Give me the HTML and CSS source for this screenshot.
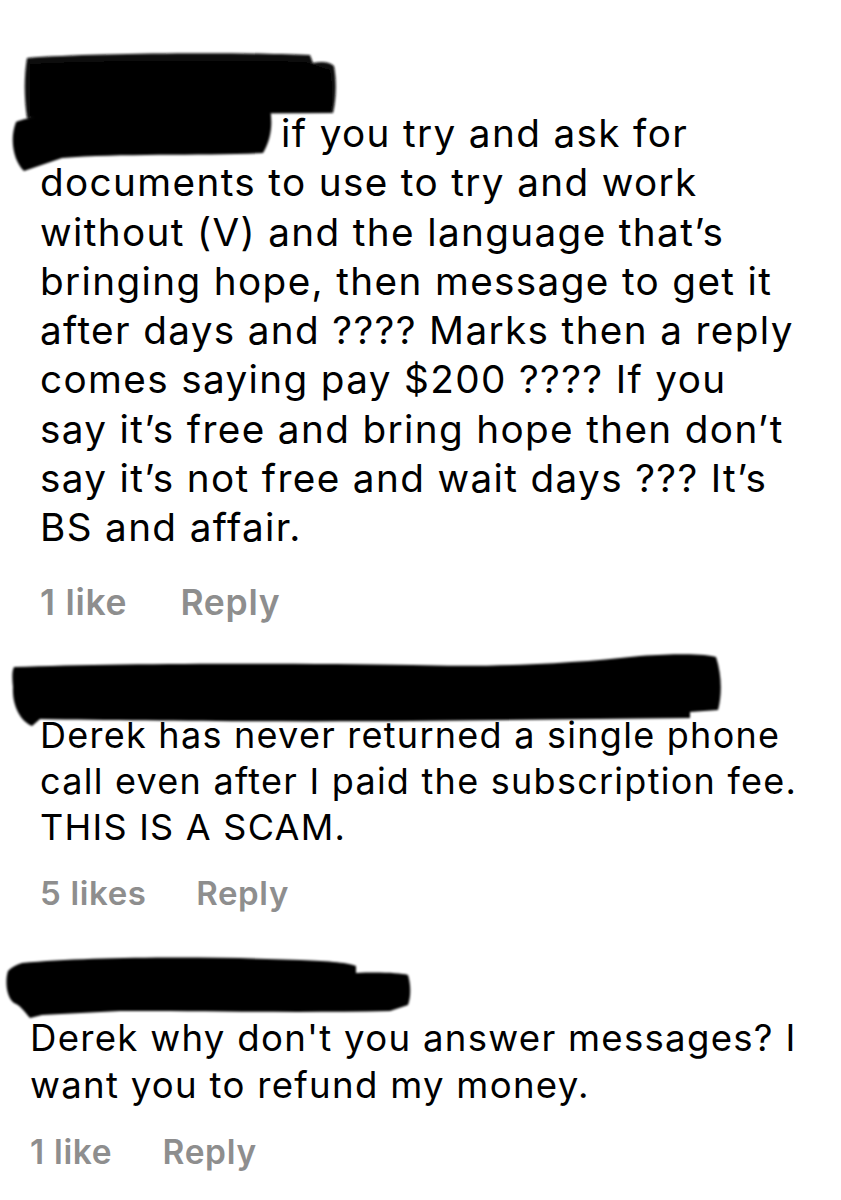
FILE: index.html
```html
<!DOCTYPE html>
<html lang="en">
<head>
    <meta charset="UTF-8">
    <meta name="viewport" content="width=device-width, initial-scale=1.0">
    <title>Comments</title>
    <link rel="stylesheet" href="styles.css">
</head>
<body>

    <!-- first comment, author and mention blacked out -->
    <div class="comment first">
        <div class="author">
            <svg class="redact" width="841" height="130" viewBox="0 52 841 130">
                <defs>
                    <filter id="soft1" x="-5%" y="-20%" width="110%" height="140%">
                        <feGaussianBlur stdDeviation="1.3"/>
                    </filter>
                </defs>
                <g filter="url(#soft1)">
                    <path fill="#0d0d0d" d="M27,58 C90,53 230,52 310,55 L313,63 C322,61 330,62 334,66 C337,82 336,100 333,113 L120,114 L27,118 C24,98 24,75 27,58 Z"/>
                    <path fill="#000" d="M30,64 C100,60 240,60 305,62 L330,70 C333,88 333,104 330,112 L110,112 L30,116 Z"/>
                    <path fill="#000" d="M16,122 C40,112 120,106 240,105 L270,109 C273,124 271,140 263,153 C200,156 120,153 62,158 L24,171 C14,162 9,140 16,122 Z"/>
                </g>
            </svg>
        </div>
        <p class="body"><span class="mention"></span>if you try and ask for<br>documents to use to try and work<br>without (V) and the language that’s<br>bringing hope, then message to get it<br>after days and ???? Marks then a reply<br>comes saying pay $200 ???? If you<br>say it’s free and bring hope then don’t<br>say it’s not free and wait days ??? It’s<br>BS and affair.</p>
        <div class="actions"><span class="likes">1 like</span><span class="reply">Reply</span></div>
    </div>

    <div class="comment second">
        <div class="author">
            <svg class="redact" width="841" height="80" viewBox="0 645 841 80">
                <defs>
                    <filter id="soft2" x="-5%" y="-20%" width="110%" height="140%">
                        <feGaussianBlur stdDeviation="1.3"/>
                    </filter>
                </defs>
                <g filter="url(#soft2)">
                    <path fill="#000" d="M14,662 C120,658 300,658 412,660 C480,662 560,660 640,651 C680,648 708,649 716,652 C722,670 722,690 718,705 L690,707 L690,713 C600,714 500,715 410,716 C300,717 150,716 40,714 L32,721 C20,716 12,700 13,682 C12,672 12,666 14,662 Z"/>
                </g>
            </svg>
        </div>
        <p class="body">Derek has never returned a single phone<br>call even after I paid the subscription fee.<br>THIS IS A SCAM.</p>
        <div class="actions"><span class="likes">5 likes</span><span class="reply">Reply</span></div>
    </div>

    <div class="comment third">
        <div class="author">
            <svg class="redact" width="841" height="75" viewBox="0 946 841 75">
                <defs>
                    <filter id="soft3" x="-5%" y="-20%" width="110%" height="140%">
                        <feGaussianBlur stdDeviation="1.3"/>
                    </filter>
                </defs>
                <g filter="url(#soft3)">
                    <path fill="#000" d="M22,958 C90,952 200,951 300,955 C330,956 350,958 356,961 L356,968 C380,967 400,968 408,970 C411,980 411,992 408,1000 L390,1006 C300,1008 200,1006 120,1006 L42,1010 L30,1013 C24,1006 20,1000 14,998 C6,992 5,975 8,966 C12,962 16,960 22,958 Z"/>
                </g>
            </svg>
        </div>
        <p class="body">Derek why don't you answer messages? I<br>want you to refund my money.</p>
        <div class="actions"><span class="likes">1 like</span><span class="reply">Reply</span></div>
    </div>

</body>
</html>
```
FILE: styles.css
```css
body {
    margin: 0;
    padding: 0;
    background-color: #fff;
    font-family: Inter, "Liberation Sans", Arial, sans-serif;
    color: #000;
}

.author {
    position: relative;
    overflow: visible;
}

.redact {
    display: block;
    position: relative;
    z-index: 1;
    overflow: visible;
}

.body {
    margin: 0;
    letter-spacing: 0.035em;
}

.mention {
    display: inline-block;
    width: 241px;
}

.actions {
    display: flex;
    gap: 1.5em;
    color: #8e8e8e;
    font-weight: 600;
    letter-spacing: 0.02em;
}

/* each comment was clipped from a screenshot at its own scale */
.first {
    padding-top: 52px;
}
.first .author {
    height: 57px;
}
.first .body {
    padding-left: 40px;
    font-size: 38.7px;
    line-height: 49.3px;
}
.first .actions {
    margin-top: 28px;
    padding-left: 40px;
    font-size: 35.5px;
    line-height: 43px;
}

.second {
    margin-top: 26px;
}
.second .author {
    height: 62px;
}
.second .body {
    padding-left: 40px;
    font-size: 36px;
    line-height: 46px;
}
.second .actions {
    margin-top: 23px;
    padding-left: 40px;
    font-size: 33px;
    line-height: 40px;
}

.third {
    margin-top: 38px;
}
.third .author {
    height: 64px;
}
.third .body {
    padding-left: 30px;
    font-size: 36.6px;
    line-height: 47px;
}
.third .actions {
    margin-top: 23px;
    padding-left: 30px;
    font-size: 33.5px;
    line-height: 40px;
}
```
